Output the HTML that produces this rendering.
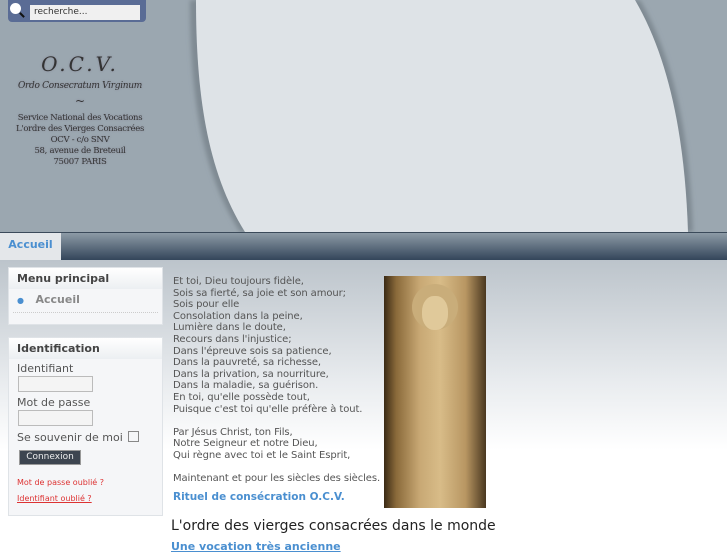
<!DOCTYPE html>
<html style="background:#fff"><head><meta charset="utf-8"><style>
html,body{margin:0;padding:0}
body{width:727px;height:545px;overflow:hidden;font-family:"DejaVu Sans","Liberation Sans",sans-serif;position:relative}
.bg{position:absolute;left:0;top:0;width:727px;height:545px;background:linear-gradient(#bcc4cb 260px,#e8ebee 380px,#fff 450px)}
.abs{position:absolute}
.serif{font-family:"DejaVu Serif","Liberation Serif",serif;color:#333;text-align:center;text-shadow:0 0 2px #889}
.box{position:absolute;left:8px;width:153px;background:#f5f6f8;border:1px solid #dfe3e7}
.box h3{margin:0;font-size:11px;font-weight:bold;color:#444;padding:4px 8px;background:linear-gradient(#fff,#eceff2)}
.lbl{font-size:11px;color:#555;margin-left:8px}
.inp{width:73px;height:14px;border:1px solid #bbb;background:#f4f4f4;margin-left:9px}
.poem{left:173px;top:276px;font-size:10px;line-height:11.6px;color:#555;letter-spacing:-0.1px}
</style></head><body>
<div class="bg"></div>
<div class="abs" style="left:0;top:0;width:727px;height:232px;background:#9ba7b0"></div>
<svg class="abs" style="left:0;top:0" width="727" height="232">
<defs><filter id="b"><feGaussianBlur stdDeviation="2"/></filter></defs>
<path d="M190 0 C190 90,200 170,240 232 L693 232 C690 140,675 60,640 0 Z" fill="#7f8a93" filter="url(#b)"/>
<path d="M196 0 C196 90,206 170,245 232 L688 232 C685 140,670 60,635 0 Z" fill="#dee3e7"/>
</svg>
<div class="abs" style="left:8px;top:0;width:138px;height:22px;background:#5a6c95;border-radius:0 0 4px 4px"></div>
<div class="abs" style="left:10px;top:3px;width:11px;height:11px;border-radius:50%;background:#fff"></div>
<div class="abs" style="left:19px;top:14px;width:6px;height:2px;background:#111;transform:rotate(45deg)"></div>
<div class="abs" style="left:30px;top:5px;width:110px;height:15px;background:#f0f0f0;font-size:9px;color:#333;line-height:15px;padding-left:4px;box-sizing:border-box">recherche...</div>
<div class="abs serif" style="left:0;top:52px;width:160px;font-size:20px;letter-spacing:3px;font-style:italic">O.C.V.</div>
<div class="abs serif" style="left:0;top:81px;width:160px;font-size:9px;font-style:italic;letter-spacing:-0.3px">Ordo Consecratum Virginum</div>
<div class="abs serif" style="left:0;top:94px;width:160px;font-size:12px">~</div>
<div class="abs serif" style="left:0;top:113px;width:160px;font-size:8.5px;line-height:11px;letter-spacing:-0.3px">Service National des Vocations<br>L'ordre des Vierges Consacrées<br>OCV - c/o SNV<br>58, avenue de Breteuil<br>75007 PARIS</div>
<div class="abs" style="left:0;top:232px;width:727px;height:27px;background:linear-gradient(#8d9ba6,#33455a);border-top:1px solid #3b4a5a"></div>
<div class="abs" style="left:0;top:233px;width:61px;height:27px;background:#e4e7ea;color:#4a8fd0;font-weight:bold;font-size:11px;line-height:24px;text-align:center">Accueil</div>
<div class="box" style="top:267px;height:56px"><h3>Menu principal</h3>
<div style="font-size:11px;color:#888;font-weight:bold;padding:4px 0 6px 4px;border-bottom:1px dotted #ccc;margin:0 4px"><span style="color:#4a8fd0;font-size:8px">●</span>&nbsp;&nbsp;&nbsp;Accueil</div></div>
<div class="box" style="top:337px;height:177px"><h3>Identification</h3>
<div class="lbl" style="margin-top:3px">Identifiant</div><div class="inp" style="margin-top:1px"></div>
<div class="lbl" style="margin-top:4px">Mot de passe</div><div class="inp" style="margin-top:1px"></div>
<div class="lbl" style="margin-top:5px">Se souvenir de moi <span style="display:inline-block;width:9px;height:9px;border:1px solid #888;vertical-align:-1px;margin-left:2px"></span></div>
<div style="margin:6px 0 0 10px;width:60px;height:13px;background:#3d4550;color:#eee;font-size:9px;text-align:center;line-height:13px;border:1px solid #999">Connexion</div>
<div style="font-size:8px;color:#d33;margin:13px 0 0 8px">Mot de passe oublié ?</div>
<div style="font-size:8px;color:#d33;margin:7px 0 0 8px;text-decoration:underline">Identifiant oublié ?</div></div>
<div class="abs poem">Et toi, Dieu toujours fidèle,<br>Sois sa fierté, sa joie et son amour;<br>Sois pour elle<br>Consolation dans la peine,<br>Lumière dans le doute,<br>Recours dans l'injustice;<br>Dans l'épreuve sois sa patience,<br>Dans la pauvreté, sa richesse,<br>Dans la privation, sa nourriture,<br>Dans la maladie, sa guérison.<br>En toi, qu'elle possède tout,<br>Puisque c'est toi qu'elle préfère à tout.<br><br>Par Jésus Christ, ton Fils,<br>Notre Seigneur et notre Dieu,<br>Qui règne avec toi et le Saint Esprit,<br><br>Maintenant et pour les siècles des siècles.</div>
<div class="abs" style="left:173px;top:491px;font-size:10.5px;font-weight:bold;color:#4a8fd0">Rituel de consécration O.C.V.</div>
<div class="abs" style="left:384px;top:276px;width:102px;height:232px;background:linear-gradient(90deg,#3a2a15 0,#8a6a3a 12%,#c8a874 35%,#d8bc88 55%,#b89662 80%,#4a3820 100%)">
<div style="position:absolute;left:28px;top:8px;width:46px;height:46px;border-radius:50%;background:#c9ad7a"></div>
<div style="position:absolute;left:38px;top:20px;width:26px;height:34px;border-radius:45%;background:#e0c99a"></div></div>
<div class="abs" style="left:171px;top:518px;font-size:14px;color:#222">L'ordre des vierges consacrées dans le monde</div>
<div class="abs" style="left:171px;top:540px;font-size:11px;color:#4a8fd0;font-weight:bold;text-decoration:underline">Une vocation très ancienne</div>
</body></html>
